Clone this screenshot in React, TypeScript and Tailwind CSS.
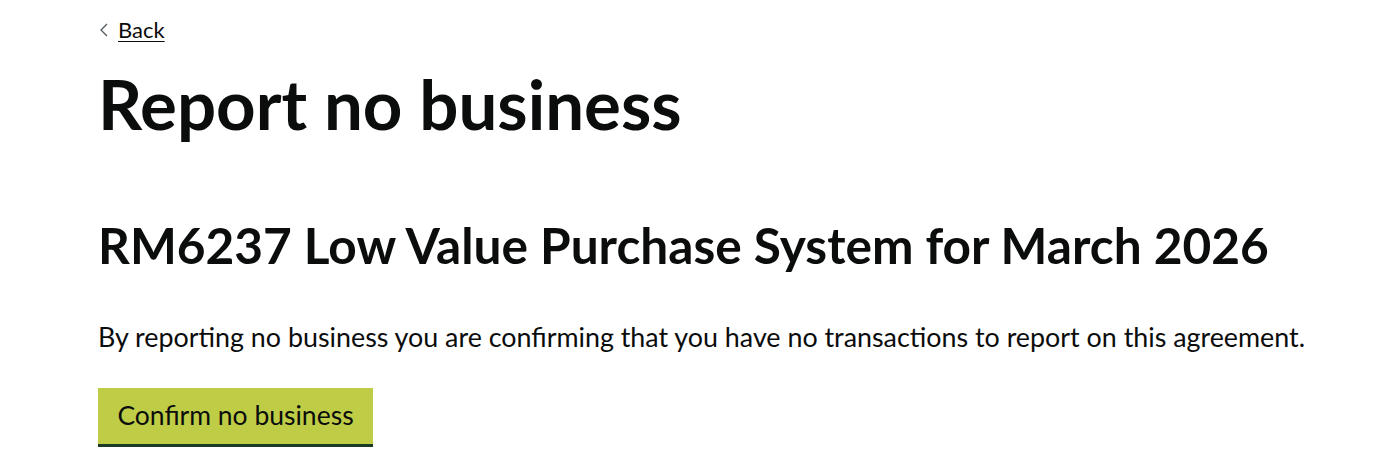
export default function App() {
  return (
    <div className="min-h-screen bg-white text-[#0b0c0c]" style={{ fontFamily: '"Lato", "Noto Sans", sans-serif' }}>
      <div className="px-[98px] pt-[14px]">
        <a href="#" className="inline-flex items-center gap-[6px] text-[22px] leading-[32px] text-[#0b0c0c] underline underline-offset-[3px] decoration-1">
          <svg width="12" height="16" viewBox="0 0 12 16" className="mr-[2px]">
            <path d="M9 2 L3 8 L9 14" fill="none" stroke="#505a5f" strokeWidth="1.3" />
          </svg>
          Back
        </a>
        <h1 className="mt-[18px] text-[69px] font-bold leading-[80px]">Report no business</h1>
        <h2 className="mt-[71px] whitespace-nowrap text-[49.6px] font-bold leading-[60px]">
          RM6237 Low Value Purchase System for March 2026
        </h2>
        <p className="mt-[44px] whitespace-nowrap text-[26.85px] leading-[36px]">
          By reporting no business you are confirming that you have no transactions to report on this agreement.
        </p>
        <button className="mt-[33px] block h-[56px] w-[275px] bg-[#bfcd46] text-[26.5px] text-[#0b0c0c] shadow-[0_3px_0_#1b3a23]">
          Confirm no business
        </button>
      </div>
    </div>
  );
}
